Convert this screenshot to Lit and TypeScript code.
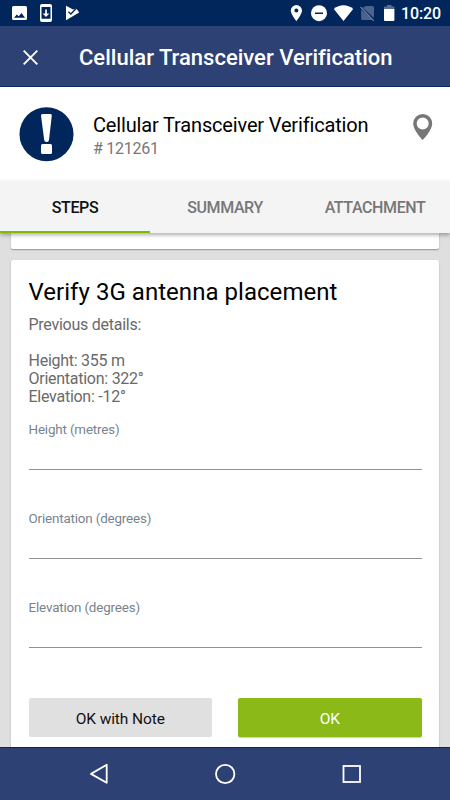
import { LitElement, html, css } from "lit";
import { customElement } from "lit/decorators.js";
import { classMap } from "lit/directives/class-map.js";

@customElement("status-bar")
class StatusBar extends LitElement {
  static styles = css`
    :host { display: flex; height: 26px; background: #00265c; color: #fff; flex: none; box-sizing: border-box; padding: 0 9px 0 9px; justify-content: space-between; align-items: stretch; }
    svg { display: block; flex: none; }
    .right { display: flex; }
    .time { width: 42px; font-size: 16px; line-height: 28px; font-weight: 500; letter-spacing: -0.1px; text-align: right; white-space: nowrap; }
  `;
  render() {
    return html`
      <svg width="75" height="26" viewBox="9 0 75 26" fill="#fff">
        <path fill-rule="evenodd" d="M13.5 6H25.5Q27 6 27 7.5V18.5Q27 20 25.5 20H13.5Q12 20 12 18.5V7.5Q12 6 13.5 6ZM14 17.7H25L21.5 13L18.8 16.2L16.8 14.4Z"/>
        <path fill-rule="evenodd" d="M42 4H50Q52 4 52 6V20Q52 22 50 22H42Q40 22 40 20V6Q40 4 42 4ZM41.5 7V18.8H50.5V7Z"/>
        <path d="M45.2 9.5h1.7v4h2.5L46 17l-3.4-3.5h2.6Z"/>
        <path d="M66 5.8L73 9.5L76.3 8.6L79.2 12.4L66 20.2Z"/>
        <path d="M68.4 11.8L70.9 14L76.6 8" fill="none" stroke="#00265c" stroke-width="1.3"/>
      </svg>
      <div class="right">
        <svg width="111" height="26" viewBox="288 0 111 26" fill="#fff">
          <path fill-rule="evenodd" d="M296.4 5A5.6 5.6 0 0 0 290.8 10.6C290.8 14.6 296.4 21.2 296.4 21.2S302 14.6 302 10.6A5.6 5.6 0 0 0 296.4 5ZM296.4 8.6A2 2 0 1 1 296.4 12.6A2 2 0 1 1 296.4 8.6Z"/>
          <circle cx="319" cy="13.2" r="8"/><path d="M315 12.5h8v1.5h-8Z" fill="#00265c"/>
          <path d="M333.8 9.1C339.5 4.1 347.5 4.1 353.2 9.1L343.5 21Z"/>
          <path d="M366 6H372.5Q374 6 374 7.5V18L362.6 7.8ZM361.2 9.4L373 20H362.5Q361.2 20 361.2 18.8Z" fill="#4a648c"/>
          <path d="M360.5 7L373.8 20.8" fill="none" stroke="#6d82a3" stroke-width="1.1"/>
          <path d="M384 8V7Q384 6.5 384.6 6.5H387V5H391.5V6.5H393.8Q394.4 6.5 394.4 7V9H384Z" fill="#576e93"/>
          <path d="M384 9H394.4V20Q394.4 21 393.5 21H385Q384 21 384 20Z"/>
        </svg>
        <div class="time">10:20</div>
      </div>`;
  }
}

@customElement("text-field")
class TextField extends LitElement {
  static properties = { label: { type: String } };
  declare label: string;
  static styles = css`
    :host { display: block; height: 89px; box-sizing: border-box; }
    .label { font-size: 13.4px; line-height: 16px; height: 16px; color: #77838d; letter-spacing: -0.16px; white-space: nowrap; }
    .line { height: 31px; border-bottom: 1px solid #929292; }
  `;
  render() {
    return html`<div class="label">${this.label}</div><div class="line"></div>`;
  }
}

@customElement("app-root")
class AppRoot extends LitElement {
  static properties = { active: { type: String } };
  declare active: string;
  constructor() {
    super();
    this.active = "STEPS";
  }
  static styles = css`
    :host { display: flex; flex-direction: column; width: 450px; height: 800px; overflow: hidden; background: #dfdfdf; font-family: Roboto, "Liberation Sans", sans-serif; color: #000; }
    svg { display: block; flex: none; }
    .bar { height: 61px; flex: none; box-sizing: border-box; display: flex; align-items: center; background: #2e4174; color: #fff; padding: 2px 0 0 23px; border-bottom: 1px solid #092b63; }
    .bar-title { margin: 2px 0 0 41px; font-size: 22px; line-height: 28px; font-weight: 500; white-space: nowrap; letter-spacing: 0.01px; }
    .head { height: 94px; flex: none; display: flex; background: #fff; box-sizing: border-box; padding: 20px 17px 0 19px; }
    .head-text { margin: 5px 0 0 19px; flex: 1; white-space: nowrap; }
    .name { font-size: 20px; line-height: 26px; letter-spacing: -0.16px; }
    .number { font-size: 16px; line-height: 21px; color: #777; letter-spacing: -0.25px; }
    .pin { margin-top: 6px; }
    .tabs { height: 52px; flex: none; display: grid; grid-template: 52px / repeat(3, 1fr); background: #f4f4f4; box-shadow: 0 2px 4px rgba(0,0,0,.32); position: relative; z-index: 1; }
    .tab { box-sizing: border-box; height: 52px; text-align: center; font-size: 16px; line-height: 54px; font-weight: 500; color: #777; letter-spacing: -0.4px; }
    .tab.active { color: #111; box-shadow: inset 0 -2px #83b900; }
    .body { flex: 1; min-height: 0; overflow: hidden; padding: 0 11px; }
    .card { background: #fff; border-radius: 2px; box-shadow: 0 1px 1.5px rgba(0,0,0,.35); }
    .previous { height: 16px; border-radius: 0 0 2px 2px; }
    .step { margin-top: 11px; height: 520px; box-sizing: border-box; padding: 16px 17.5px 0; }
    .step-title { font-size: 24px; line-height: 32px; height: 30px; white-space: nowrap; letter-spacing: 0.04px; }
    .details { margin-top: 10px; font-size: 16px; line-height: 18px; color: #6a6a6a; white-space: pre-line; height: 106px; letter-spacing: -0.26px; }
    .buttons { display: flex; gap: 26px; margin-top: 9px; }
    .button { flex: 1; height: 39px; border-radius: 2px; background: #e0e0e0; font-size: 15.5px; line-height: 42px; text-align: center; color: #111; letter-spacing: -0.1px; }
    .button.primary { background: #8ab918; color: #fff; box-shadow: 0 1px 1px rgba(0,0,0,.2); }
    .nav { height: 53px; flex: none; box-sizing: border-box; background: #2e4174; border-top: 1px solid #00286b; }
  `;
  render() {
    return html`
      <status-bar></status-bar>
      <div class="bar">
        <svg width="15" height="15" viewBox="0 0 15 15" fill="none" stroke="#fff" stroke-width="1.9"><path d="M.7.7L14.3 14.3M14.3.7L.7 14.3"/></svg>
        <div class="bar-title">Cellular Transceiver Verification</div>
      </div>
      <div class="head">
        <svg width="55" height="55" viewBox="19 107 55 55">
          <circle cx="46.5" cy="134.2" r="27" fill="#00265c"/>
          <path d="M42.5 114H50.5Q52 114 51.8 115.5L49 140Q48.8 142 46.6 142Q44.5 142 44.2 140L41 115.5Q41 114 42.5 114ZM42.5 144H50.5Q52 144 52 145.5V152.5Q52 154 50.5 154H42.5Q41 154 41 152.5V145.5Q41 144 42.5 144Z" fill="#fff"/>
        </svg>
        <div class="head-text">
          <div class="name">Cellular Transceiver Verification</div>
          <div class="number"># 121261</div>
        </div>
        <svg class="pin" width="20" height="28" viewBox="413 113 20 28">
          <path fill-rule="evenodd" fill="#777" d="M422.7 114A9.5 9.5 0 0 0 413.2 123.5C413.2 130.5 422.7 140 422.7 140S432.2 130.5 432.2 123.5A9.5 9.5 0 0 0 422.7 114ZM422.7 117.4A6 6 0 1 1 422.7 129.4A6 6 0 1 1 422.7 117.4Z"/>
        </svg>
      </div>
      <div class="tabs">
        ${["STEPS", "SUMMARY", "ATTACHMENT"].map(
          (t) => html`<div class=${classMap({ tab: true, active: t === this.active })}>${t}</div>`
        )}
      </div>
      <div class="body">
        <div class="card previous"></div>
        <div class="card step">
          <div class="step-title">Verify 3G antenna placement</div>
          <div class="details">${"Previous details:\n\nHeight: 355 m\nOrientation: 322°\nElevation: -12°"}</div>
          ${["Height (metres)", "Orientation (degrees)", "Elevation (degrees)"].map(
            (l) => html`<text-field .label=${l}></text-field>`
          )}
          <div class="buttons">
            <div class="button">OK with Note</div>
            <div class="button primary">OK</div>
          </div>
        </div>
      </div>
      <div class="nav">
        <svg width="450" height="52" viewBox="0 748 450 52" fill="none" stroke="#fff" stroke-width="1.8" stroke-linejoin="round">
          <path d="M106.7 764.8V782.8L91 773.9Z"/>
          <circle cx="225.2" cy="774" r="9.2"/>
          <rect x="343.5" y="766" width="16.5" height="16" stroke-linejoin="miter"/>
        </svg>
      </div>`;
  }
}
